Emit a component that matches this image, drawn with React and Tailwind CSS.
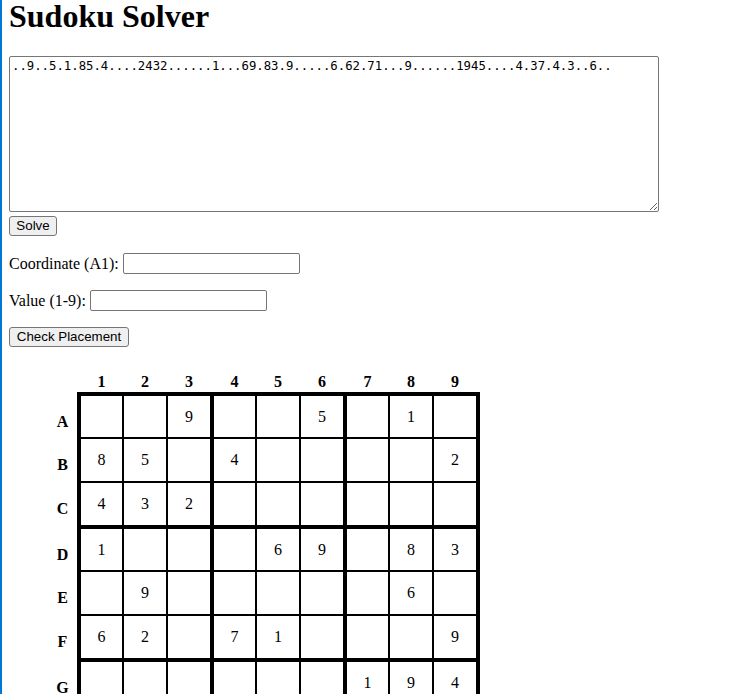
import React from "react";

const PUZZLE =
  "..9..5.1.85.4....2432......1...69.83.9.....6.62.71...9......1945....4.37.4.3..6..";
const ROWS = ["A", "B", "C", "D", "E", "F", "G", "H", "I"];

function Box({ br, bc }) {
  const cells = [];
  for (let r = 0; r < 3; r++) {
    for (let c = 0; c < 3; c++) {
      const ch = PUZZLE[(br * 3 + r) * 9 + bc * 3 + c];
      cells.push(
        <div
          key={r * 3 + c}
          className="bg-white flex items-center justify-center text-[16px] leading-none text-black"
        >
          {ch === "." ? "" : ch}
        </div>
      );
    }
  }
  return (
    <div className="grid grid-cols-[41px_42px_42px] grid-rows-[41px_42px_42px] gap-[2px] bg-black">
      {cells}
    </div>
  );
}

export default function App() {
  return (
    <div className="min-h-screen border-l-2 border-[#0078d4] pl-[7px] bg-white text-black font-['Liberation_Serif','Times_New_Roman',serif]">
      <h1 className="m-0 text-[32px] leading-[32px] font-bold">Sudoku Solver</h1>

      <textarea
        className="block mt-[24px] w-[650px] h-[156px] border border-[#767676] rounded-[2px] p-[2px] font-['DejaVu_Sans_Mono','Liberation_Mono',monospace] text-[12.3px] leading-[15px] text-black bg-white"
        defaultValue={PUZZLE}
      />

      <button className="block mt-[4px] w-[48px] h-[20px] border border-[#767676] rounded-[3px] bg-[#efefef] px-[6px] py-0 font-['Liberation_Sans',Arial,sans-serif] text-[13.33px] leading-[16px] text-black">
        Solve
      </button>

      <div className="flex items-center mt-[17px] h-[21px] text-[16px]">
        <span>Coordinate (A1):</span>
        <input
          type="text"
          className="ml-[4px] w-[177px] h-[21px] border border-[#767676] rounded-[2px] bg-white px-[2px] font-['Liberation_Sans',Arial,sans-serif] text-[13.33px]"
        />
      </div>

      <div className="flex items-center mt-[16px] h-[21px] text-[16px]">
        <span>Value (1-9):</span>
        <input
          type="text"
          className="ml-[4px] w-[177px] h-[21px] border border-[#767676] rounded-[2px] bg-white px-[2px] font-['Liberation_Sans',Arial,sans-serif] text-[13.33px]"
        />
      </div>

      <button className="block mt-[16px] w-[120px] h-[20px] border border-[#767676] rounded-[3px] bg-[#efefef] px-[6px] py-0 font-['Liberation_Sans',Arial,sans-serif] text-[13.33px] leading-[16px] text-black">
        Check Placement
      </button>

      <div className="mt-[23px] ml-[39px] flex flex-col pb-[20px]">
        <div className="flex h-[22px]">
          <div className="w-[29px]" />
          <div className="px-[4px] grid grid-cols-3 gap-[4px]">
            {[0, 1, 2].map((b) => (
              <div key={b} className="grid grid-cols-[41px_42px_42px] gap-[2px]">
                {[0, 1, 2].map((i) => (
                  <div
                    key={i}
                    className="flex items-center justify-center font-bold text-[16px]"
                  >
                    {b * 3 + i + 1}
                  </div>
                ))}
              </div>
            ))}
          </div>
        </div>

        <div className="flex">
          <div className="w-[29px] pt-[4px] flex flex-col gap-[4px]">
            {[0, 1, 2].map((b) => (
              <div
                key={b}
                className="grid grid-rows-[41px_42px_42px] gap-[2px]"
              >
                {[0, 1, 2].map((i) => (
                  <div
                    key={i}
                    className="flex items-center justify-center pt-[10px] font-bold text-[16px]"
                  >
                    {ROWS[b * 3 + i]}
                  </div>
                ))}
              </div>
            ))}
          </div>

          <div className="border-4 border-black bg-black grid grid-cols-3 gap-[4px]">
            {[0, 1, 2].map((br) =>
              [0, 1, 2].map((bc) => <Box key={br * 3 + bc} br={br} bc={bc} />)
            )}
          </div>
        </div>
      </div>
    </div>
  );
}
